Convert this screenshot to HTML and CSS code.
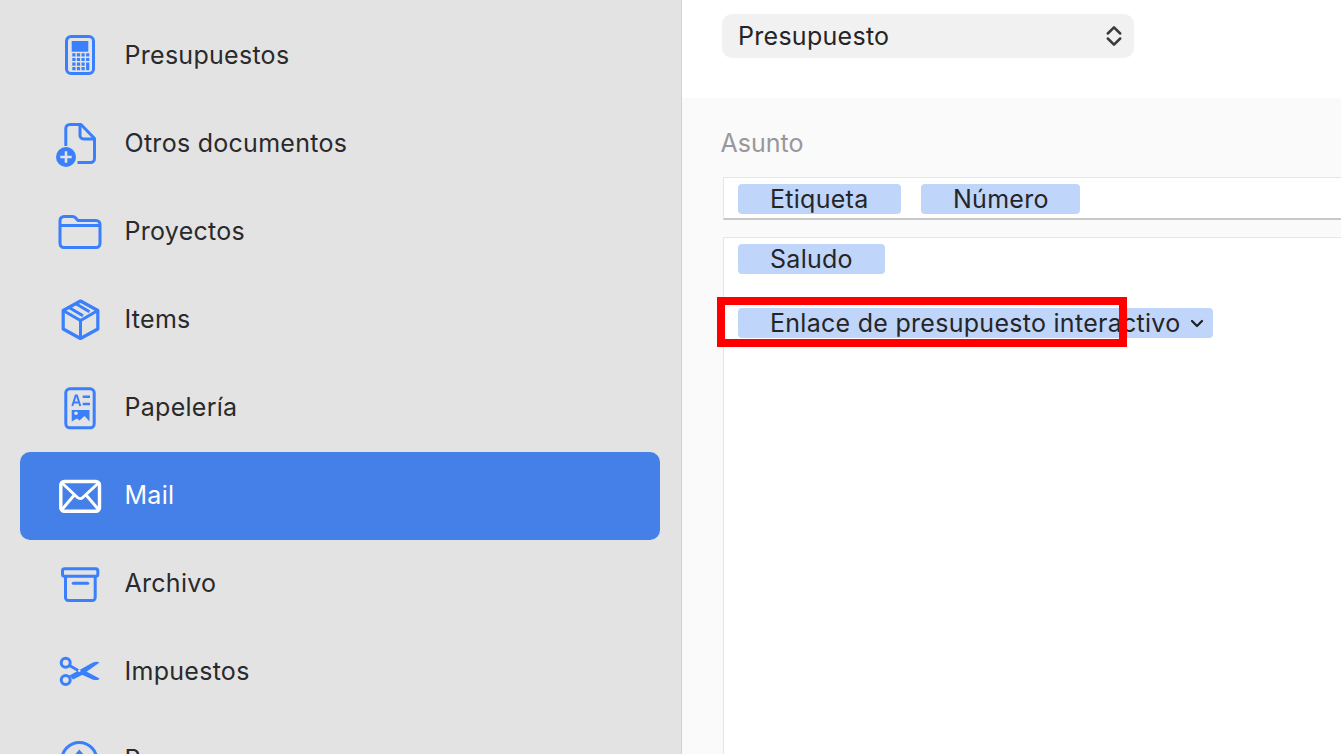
FILE: index.html
```html
<!DOCTYPE html>
<html lang="es">
<head>
<meta charset="utf-8">
<title>Mail</title>
<link rel="stylesheet" href="styles.css">
</head>
<body>
<div class="app">
  <nav class="sidebar">
    <a class="row">
      <span class="ico"><svg width="44" height="44" viewBox="0 0 44 44"><rect x="8.500" y="3.500" width="27" height="37" rx="4.500" fill="none" stroke="#3a7ffc" stroke-width="3"/><rect x="13.700" y="8" width="16.600" height="10.700" fill="#3a7ffc"/><path d="M14.300 20.300h3.200v3.200h-3.200zM18.900 20.300h3.200v3.200h-3.200zM23.500 20.300h3.200v3.200h-3.200zM28.100 20.300h3.200v3.200h-3.200zM14.300 24.900h3.200v3.200h-3.200zM18.900 24.900h3.200v3.200h-3.200zM23.500 24.900h3.200v3.200h-3.200zM28.100 24.900h3.200v3.200h-3.200zM14.300 29.500h3.200v3.200h-3.200zM18.900 29.500h3.200v3.200h-3.200zM23.500 29.500h3.200v3.200h-3.200zM28.100 29.500h3.200v7.800h-3.200zM14.300 34.100h3.200v3.200h-3.200zM18.900 34.100h3.200v3.200h-3.200zM23.500 34.100h3.200v3.200h-3.200z" fill="#3a7ffc"/></svg></span>
      <span class="label">Presupuestos</span>
    </a>
    <a class="row">
      <span class="ico"><svg class="free" width="44" height="44" viewBox="0 0 44 44"><path d="M7.800 25V7.500a4 4 0 0 1 4-4H23L36.500 17.500V37.500a4 4 0 0 1-4 4H19.500" fill="none" stroke="#3a7ffc" stroke-width="3" stroke-linejoin="round"/><path d="M22 4V14.500a3.500 3.500 0 0 0 3.500 3.500H36" fill="none" stroke="#3a7ffc" stroke-width="3"/><circle cx="8" cy="36" r="10" fill="#3a7ffc"/><path d="M8 30.300v11.400M2.300 36h11.400" stroke="#e3e3e3" stroke-width="2.600"/></svg></span>
      <span class="label">Otros documentos</span>
    </a>
    <a class="row">
      <span class="ico"><svg width="44" height="44" viewBox="0 0 44 44"><path d="M2 11.500a4 4 0 0 1 4-4h8.500a4 4 0 0 1 3 1.300L20 11.500h18a4 4 0 0 1 4 4v19a4 4 0 0 1-4 4H6a4 4 0 0 1-4-4z" fill="none" stroke="#3a7ffc" stroke-width="3" stroke-linejoin="round"/><path d="M2 16.500h40" stroke="#3a7ffc" stroke-width="3"/></svg></span>
      <span class="label">Proyectos</span>
    </a>
    <a class="row">
      <span class="ico"><svg width="44" height="44" viewBox="0 0 44 44"><path d="M22.500 4 39.800 13.500V32L22.500 41.500 5.200 32V13.500z" fill="none" stroke="#3a7ffc" stroke-width="3.200" stroke-linejoin="round"/><path d="M5.200 13.500 22.500 23.500 39.800 13.500M22.500 23.500V41M17.500 6.500 31.500 14.700M11 10.500 25 18.700" fill="none" stroke="#3a7ffc" stroke-width="3"/></svg></span>
      <span class="label">Items</span>
    </a>
    <a class="row">
      <span class="ico"><svg class="free" width="44" height="44" viewBox="0 0 44 44"><rect x="7.800" y="3.800" width="28.400" height="39" rx="4" fill="none" stroke="#3a7ffc" stroke-width="3"/><path d="M14.300 21 17.700 10.500h1.200L22.300 21M15.300 17.500h6" fill="none" stroke="#3a7ffc" stroke-width="2"/><path d="M24.700 11.700H32M24.700 19H32" stroke="#3a7ffc" stroke-width="2.400"/><path d="M13.700 25H31.500V36.500L26.500 31l-5 4.500-2.500-2-5.300 3z" fill="#3a7ffc"/><circle cx="18" cy="28.300" r="1.800" fill="#e3e3e3"/></svg></span>
      <span class="label">Papelería</span>
    </a>
    <a class="row active">
      <span class="ico"><svg width="44" height="44" viewBox="0 0 44 44"><rect x="2.800" y="8.500" width="38.700" height="29.700" rx="3.500" fill="none" stroke="#fff" stroke-width="3.400"/><path d="M4 10 19.500 24.500a3.800 3.800 0 0 0 5.300 0L40.500 10M4 36.500 16.500 21.800M40.500 36.500 27.800 21.800" fill="none" stroke="#fff" stroke-width="3"/></svg></span>
      <span class="label">Mail</span>
    </a>
    <a class="row">
      <span class="ico"><svg width="44" height="44" viewBox="0 0 44 44"><rect x="4.500" y="7.800" width="35.300" height="7.500" rx="2" fill="none" stroke="#3a7ffc" stroke-width="3"/><path d="M7.500 15.300V36.500a3 3 0 0 0 3 3H34.200a3 3 0 0 0 3-3V15.300" fill="none" stroke="#3a7ffc" stroke-width="3"/><path d="M15.300 22.300H29.700" stroke="#3a7ffc" stroke-width="3" stroke-linecap="round"/></svg></span>
      <span class="label">Archivo</span>
    </a>
    <a class="row">
      <span class="ico"><svg width="44" height="44" viewBox="0 0 44 44"><circle cx="7.700" cy="13.700" r="4.500" fill="none" stroke="#3a7ffc" stroke-width="3"/><circle cx="7.700" cy="31" r="4.500" fill="none" stroke="#3a7ffc" stroke-width="3"/><path d="M11.500 16.500 21 22" stroke="#3a7ffc" stroke-width="3" fill="none"/><path d="M11.500 26.500 34 14c3-1.500 5.500-1.500 7.500-.5L24 26 15 30.500z" fill="#3a7ffc"/><path d="M26.500 21.500 41.500 29.500c-.5 1.800-4 2-7 1L23.500 25.500z" fill="#3a7ffc"/><circle cx="21.300" cy="21.700" r="1.200" fill="#e3e3e3"/></svg></span>
      <span class="label">Impuestos</span>
    </a>
    <a class="row">
      <span class="ico"><svg width="44" height="44" viewBox="0 0 44 44"><circle cx="21.300" cy="23" r="17.500" fill="none" stroke="#3a7ffc" stroke-width="3"/><path d="M21.300 12.500 26 18H16.600z" fill="#3a7ffc"/></svg></span>
      <span class="label">Pagos</span>
    </a>
  </nav>
  <main class="main">
    <header class="head">
      <div class="select">
        <span>Presupuesto</span>
        <svg width="16" height="24" viewBox="0 0 16 24"><path d="M1.800 9.500 8 3.300 14.200 9.500M1.800 14.500 8 20.700 14.200 14.500" fill="none" stroke="#3a3a3c" stroke-width="2.500" stroke-linecap="round" stroke-linejoin="round"/></svg>
      </div>
    </header>
    <section class="body">
      <div class="title">Asunto</div>
      <div class="field subject">
        <span class="chip chip-label">Etiqueta</span>
        <span class="chip chip-num">Número</span>
      </div>
      <div class="field message">
        <div class="line"><span class="chip chip-hello">Saludo</span></div>
        <div class="line"><span class="chip chip-link">Enlace de presupuesto interactivo<svg class="caret" width="14" height="9" viewBox="0 0 14 9"><path d="M2 2 7 7 12 2" fill="none" stroke="#1f1f21" stroke-width="2.200" stroke-linecap="round" stroke-linejoin="round"/></svg></span></div>
      </div>
      <div class="mark"></div>
    </section>
  </main>
</div>
</body>
</html>
```
FILE: styles.css
```css
* { box-sizing: border-box; }
html, body { margin: 0; height: 100%; overflow: hidden; }
body { font-family: Inter, "Noto Sans", sans-serif; color: #252527; background: #fff; letter-spacing: .28px; }
.app { display: flex; height: 754px; width: 1341px; overflow: hidden; }
.sidebar { width: 682px; flex: none; background: #e3e3e3; border-right: 1px solid #d2d2d2; padding: 12px 21px 0 20px; overflow: hidden; }
.row { display: flex; align-items: center; height: 88px; border-radius: 10px; padding: 0 0 2px 38px; gap: 22.5px; font-size: 25px; color: #2a2a2c; }
.row.active { background: #4480e8; color: #fff; }
.ico { width: 44px; height: 44px; flex: none; display: block; }
.ico svg { display: block; }
.ico svg.free { overflow: visible; }
.main { flex: 1; min-width: 0; display: flex; flex-direction: column; }
.head { height: 98px; flex: none; padding: 14px 0 0 40px; background: #fff; }
.select { width: 412px; height: 44px; border-radius: 10px; background: #f1f1f1; display: flex; align-items: center; justify-content: space-between; padding: 0 12px 0 16px; font-size: 25px; }
.body { flex: 1; background: #fafafa; position: relative; padding: 29px 0 0 38.5px; }
.title { font-size: 25px; color: #98989b; line-height: 32px; height: 50px; letter-spacing: 0; }
.field { margin-left: 2.500px; background: #fff; border: 1px solid #e6e6e6; border-right: 0; padding-left: 14px; }
.subject { height: 43px; display: flex; gap: 20px; padding-top: 6px; border-bottom: 2px solid #c8c8c8; }
.message { margin-top: 17px; height: 540px; border-bottom: 0; padding-top: 6px; }
.line { height: 64px; }
.chip { display: inline-flex; align-items: center; height: 30px; border-radius: 4px; background: #c0d5fa; font-size: 25px; color: #252527; padding-left: 32px; flex: none; }
.chip-label { width: 163px; }
.chip-num { width: 159px; }
.chip-hello { width: 147px; }
.chip-link { width: 475px; }
.caret { margin-left: 10px; }
.mark { position: absolute; left: 35px; top: 199px; width: 410px; height: 50px; border: 8px solid #fe0000; }
```
